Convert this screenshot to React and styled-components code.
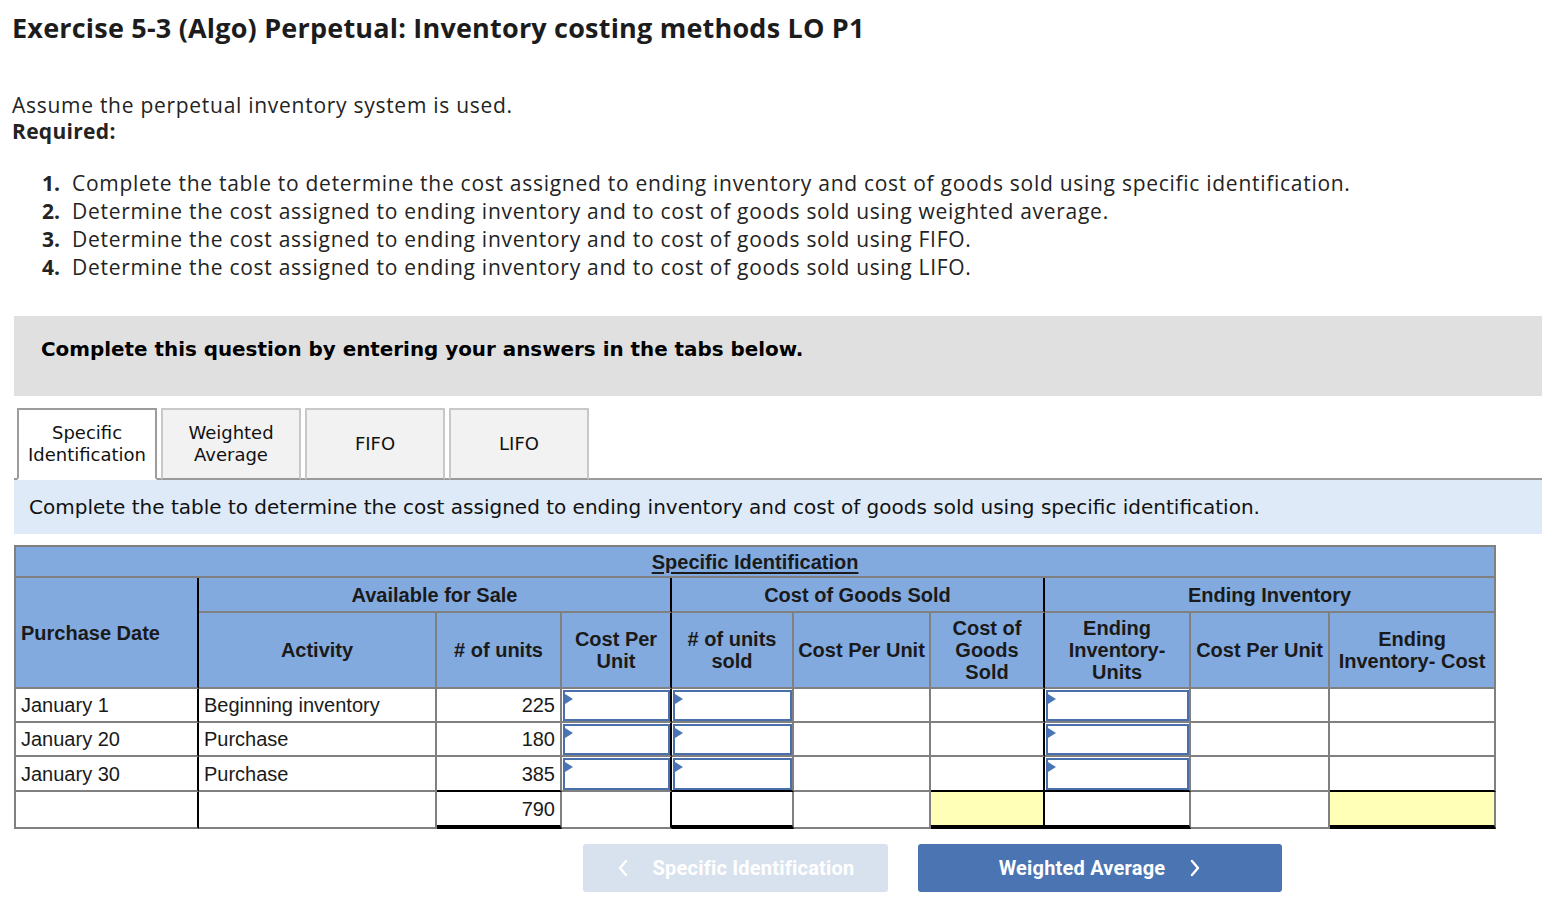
import React from 'react';
import styled, { createGlobalStyle } from 'styled-components';

const GlobalStyle = createGlobalStyle`
  *, *::before, *::after { box-sizing: border-box; }
  html, body { margin: 0; padding: 0; background: #fff; }
  body { font-family: "Open Sans", Lato, sans-serif; color: #222; }
`;

const Page = styled.div`
  width: 1542px;
  padding: 12px 0 20px 14px;
`;

const Title = styled.h1`
  margin: 0 0 0 -2px;
  font-family: "Open Sans", sans-serif;
  font-weight: 700;
  font-size: 27px;
  line-height: 32px;
  letter-spacing: 0.2px;
  color: #1c1c1c;
`;

const Intro = styled.p`
  margin: 48px 0 0 -2px;
  font-size: 21px;
  line-height: 26px;
  letter-spacing: 0.72px;
  color: #232323;
`;

const Bold = styled.strong`
  display: block;
  font-weight: 700;
  letter-spacing: 0.3px;
`;

const List = styled.ol`
  list-style: none;
  margin: 25px 0 0;
  padding: 0;
`;

const Item = styled.li`
  display: flex;
  font-size: 21px;
  line-height: 28px;
  letter-spacing: 0.72px;
  color: #232323;
`;

const Num = styled.span`
  width: 46px;
  margin-right: 12px;
  text-align: right;
  font-weight: 700;
  letter-spacing: 0;
`;

const Banner = styled.div`
  margin-top: 35px;
  height: 80px;
  background: #e0e0e0;
  padding: 22px 27px 0;
  font-family: "DejaVu Sans", Verdana, sans-serif;
  font-weight: 700;
  font-size: 19.9px;
  line-height: 24px;
  color: #000;
`;

const TabBar = styled.div`
  margin-top: 12px;
  display: flex;
  gap: 4px;
  padding-left: 3px;
  border-bottom: 2px solid #9a9a9a;
`;

const Tab = styled.div`
  width: 140px;
  height: 72px;
  margin-bottom: -2px;
  display: flex;
  align-items: center;
  justify-content: center;
  text-align: center;
  font-family: "DejaVu Sans", Verdana, sans-serif;
  font-size: 18px;
  line-height: 22px;
  color: #111;
  background: ${(p) => (p.$active ? '#fff' : '#f2f2f2')};
  border: 2px solid ${(p) => (p.$active ? '#9c9c9c' : '#c8c8c8')};
  border-bottom-color: ${(p) => (p.$active ? '#fff' : '#9a9a9a')};
`;

const Instruction = styled.div`
  height: 54px;
  display: flex;
  align-items: center;
  padding-left: 15px;
  background: #deeaf7;
  font-family: "DejaVu Sans", Verdana, sans-serif;
  font-size: 20px;
  color: #111;
`;

const Table = styled.table`
  margin-top: 11px;
  border-collapse: separate;
  border-spacing: 0;
  table-layout: fixed;
  width: 1480px;
  border-top: 2px solid #808080;
  border-left: 2px solid #808080;
  font-family: "Liberation Sans", Arial, sans-serif;
  font-size: 20px;
  color: #1a1a1a;
`;

const Th = styled.th`
  height: ${(p) => p.$h}px;
  padding: 0 4px;
  background: #83aadf;
  font-weight: 700;
  line-height: 22px;
  text-align: ${(p) => (p.$left ? 'left' : 'center')};
  padding-left: ${(p) => (p.$left ? '5px' : '4px')};
  border-right: 2px solid ${(p) => (p.$rb ? '#000' : '#808080')};
  border-bottom: 2px solid #808080;
`;

const Caption = styled.span`
  text-decoration: underline;
  text-underline-offset: 3px;
`;

const Td = styled.td`
  height: ${(p) => p.$h}px;
  padding: ${(p) => (p.$input ? '1px 0 0 1px' : '0 5px')};
  vertical-align: ${(p) => (p.$input ? 'top' : 'middle')};
  text-align: ${(p) => (p.$right ? 'right' : 'left')};
  line-height: 22px;
  background: ${(p) => (p.$yellow ? '#ffffb8' : '#fff')};
  border-right: 2px solid ${(p) => (p.$rb ? '#000' : '#808080')};
  border-bottom: ${(p) =>
    p.$bb === 'thick' ? '4px solid #000' : p.$bb === 'black' ? '2px solid #000' : '2px solid #808080'};
`;

const InputBox = styled.div`
  position: relative;
  height: ${(p) => p.$h}px;
  border: 2px solid #4a6fad;
  background: #fff;
  &::before {
    content: '';
    position: absolute;
    top: 2px;
    left: 0;
    border-left: 8px solid #4a74b8;
    border-top: 5px solid transparent;
    border-bottom: 5px solid transparent;
  }
`;

const ButtonRow = styled.div`
  margin-top: 15px;
  padding-left: 569px;
  display: flex;
  gap: 30px;
`;

const NavButton = styled.button`
  width: ${(p) => p.$w}px;
  height: 48px;
  border: none;
  border-radius: 3px;
  display: flex;
  align-items: center;
  justify-content: center;
  gap: 24px;
  background: ${(p) => (p.$disabled ? '#d8e2ee' : '#4a74b2')};
  color: #fff;
  font-family: Roboto, "Liberation Sans", sans-serif;
  font-weight: 700;
  font-size: 20px;
  letter-spacing: 0.2px;
  padding: 0;
`;

const Chevron = ({ dir }) => (
  <svg width="12" height="18" viewBox="0 0 12 18" fill="none">
    <path
      d={dir === 'left' ? 'M9 2 L3 9 L9 16' : 'M3 2 L9 9 L3 16'}
      stroke="#fff"
      strokeWidth="2.4"
      strokeLinecap="round"
      strokeLinejoin="round"
    />
  </svg>
);

const rows = [
  { date: 'January 1', activity: 'Beginning inventory', units: '225', h: 34 },
  { date: 'January 20', activity: 'Purchase', units: '180', h: 34 },
  { date: 'January 30', activity: 'Purchase', units: '385', h: 35, last: true },
];

const tasks = [
  'Complete the table to determine the cost assigned to ending inventory and cost of goods sold using specific identification.',
  'Determine the cost assigned to ending inventory and to cost of goods sold using weighted average.',
  'Determine the cost assigned to ending inventory and to cost of goods sold using FIFO.',
  'Determine the cost assigned to ending inventory and to cost of goods sold using LIFO.',
];

const cols = [183, 238, 125, 110, 122, 137, 114, 146, 139, 166];

export default function App() {
  return (
    <>
      <GlobalStyle />
      <Page>
        <Title>Exercise 5-3 (Algo) Perpetual: Inventory costing methods LO P1</Title>
        <Intro>
          Assume the perpetual inventory system is used.
          <Bold>Required:</Bold>
        </Intro>
        <List>
          {tasks.map((t, i) => (
            <Item key={i}>
              <Num>{i + 1}.</Num>
              <span>{t}</span>
            </Item>
          ))}
        </List>
        <Banner>Complete this question by entering your answers in the tabs below.</Banner>
        <TabBar>
          <Tab $active>Specific<br />Identification</Tab>
          <Tab>Weighted<br />Average</Tab>
          <Tab>FIFO</Tab>
          <Tab>LIFO</Tab>
        </TabBar>
        <Instruction>
          Complete the table to determine the cost assigned to ending inventory and cost of goods sold using specific identification.
        </Instruction>
        <Table>
          <colgroup>
            {cols.map((w, i) => (
              <col key={i} style={{ width: w }} />
            ))}
          </colgroup>
          <thead>
            <tr>
              <Th colSpan={10} $h={31}>
                <Caption>Specific Identification</Caption>
              </Th>
            </tr>
            <tr>
              <Th rowSpan={2} $left $rb $h={35}>Purchase Date</Th>
              <Th colSpan={3} $rb $h={35}>Available for Sale</Th>
              <Th colSpan={3} $rb $h={35}>Cost of Goods Sold</Th>
              <Th colSpan={3} $h={35}>Ending Inventory</Th>
            </tr>
            <tr>
              <Th $h={76}>Activity</Th>
              <Th $h={76}># of units</Th>
              <Th $h={76} $rb>Cost Per Unit</Th>
              <Th $h={76}># of units sold</Th>
              <Th $h={76}>Cost Per Unit</Th>
              <Th $h={76} $rb>Cost of Goods Sold</Th>
              <Th $h={76}>Ending Inventory- Units</Th>
              <Th $h={76}>Cost Per Unit</Th>
              <Th $h={76}>Ending Inventory- Cost</Th>
            </tr>
          </thead>
          <tbody>
            {rows.map((r) => {
              const bb = r.last ? 'black' : undefined;
              const boxH = r.h - 3;
              return (
                <tr key={r.date}>
                  <Td $h={r.h} $rb>{r.date}</Td>
                  <Td $h={r.h}>{r.activity}</Td>
                  <Td $h={r.h} $right $bb={bb}>{r.units}</Td>
                  <Td $h={r.h} $input $rb><InputBox $h={boxH} /></Td>
                  <Td $h={r.h} $input $bb={bb}><InputBox $h={boxH} /></Td>
                  <Td $h={r.h} />
                  <Td $h={r.h} $rb $bb={bb} />
                  <Td $h={r.h} $input $bb={bb}><InputBox $h={boxH} /></Td>
                  <Td $h={r.h} />
                  <Td $h={r.h} $bb={bb} />
                </tr>
              );
            })}
            <tr>
              <Td $h={37} $rb />
              <Td $h={37} />
              <Td $h={37} $right $bb="thick">790</Td>
              <Td $h={37} $rb />
              <Td $h={37} $bb="thick" />
              <Td $h={37} />
              <Td $h={37} $rb $yellow $bb="thick" />
              <Td $h={37} $bb="thick" />
              <Td $h={37} />
              <Td $h={37} $yellow $bb="thick" />
            </tr>
          </tbody>
        </Table>
        <ButtonRow>
          <NavButton $w={305} $disabled>
            <Chevron dir="left" />
            Specific Identification
          </NavButton>
          <NavButton $w={364}>
            Weighted Average
            <Chevron dir="right" />
          </NavButton>
        </ButtonRow>
      </Page>
    </>
  );
}
